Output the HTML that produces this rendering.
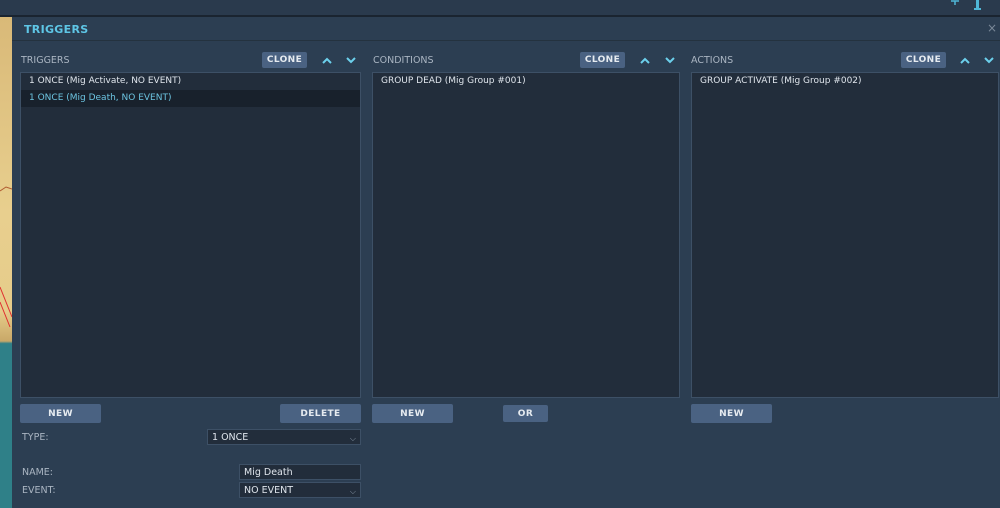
<!DOCTYPE html>
<html><head><meta charset="utf-8"><style>
*{box-sizing:border-box;margin:0;padding:0}
body{width:1000px;height:508px;overflow:hidden;background:#2b3c50;font-family:"DejaVu Sans","Liberation Sans",sans-serif;position:relative;color:#d8dee6}
.abs{position:absolute}
.top{left:0;top:0;width:1000px;height:15px;background:#2a3a4d}
.topline{left:0;top:15px;width:1000px;height:2px;background:#1a2430}
.map{left:0;top:17px;width:12px;height:491px;background:linear-gradient(#d9b978 0,#e8cf8e 40%,#e6cc8a 60%,#c9a868 66%,#2f8088 66.5%,#2f8088 100%)}
.panel{left:12px;top:17px;width:988px;height:491px;background:#2c3e52}
.title{left:24px;top:23px;font-size:11px;font-weight:bold;color:#5ec6e6;letter-spacing:.3px}
.sep{left:12px;top:40px;width:988px;height:1px;background:#24323f}
.x{left:987px;top:21px;font-size:12px;color:#7a8898}
.lbl{font-size:9.5px;color:#aab5c2}
.list{background:#222d3b;border:1px solid #3d5066}
.item{font-size:9px;color:#dfe5ec;height:17px;line-height:17px;padding-left:8px}
.btn{background:#4a6282;color:#e6ebf0;font-size:9px;font-weight:bold;border-radius:2px;letter-spacing:.4px;display:flex;align-items:center;justify-content:center}
.sel{background:#222d3b;border:1px solid #3d5066;font-size:9.5px;color:#dfe5ec;padding-left:4px}
.sel span{position:absolute;right:4px;top:1px;color:#8a98a8;font-size:8px}
</style></head><body>
<div class="abs top"></div>
<svg class="abs" style="left:946px;top:0" width="54" height="12"><path d="M5 1 L13 1 M9 1 L9 5" stroke="#4fb6d6" stroke-width="1.5"/><rect x="30" y="0" width="3" height="9" fill="#4fb6d6"/><rect x="28" y="8" width="7" height="2" fill="#4fb6d6"/></svg>
<div class="abs topline"></div>
<div class="abs map"></div>
<svg class="abs" style="left:0;top:17px" width="12" height="320"><path d="M0 174 L6 170 L12 172" stroke="#b05a30" fill="none"/><path d="M0 270 L12 300 M0 285 L10 310" stroke="#e03030" fill="none"/></svg>
<div class="abs panel"></div>
<div class="abs title">TRIGGERS</div>
<div class="abs x">×</div>
<div class="abs sep"></div>

<svg class="abs" style="left:0;top:0" width="1000" height="80" fill="none" stroke="#6cd0ec" stroke-width="2">
<path d="M323 63 L327 59 L331 63"/><path d="M347 58 L351 62 L355 58"/>
<path d="M641 63 L645 59 L649 63"/><path d="M666 58 L670 62 L674 58"/>
<path d="M961 63 L965 59 L969 63"/><path d="M985 58 L989 62 L993 58"/>
</svg>

<div class="abs lbl" style="left:21px;top:55px">TRIGGERS</div>
<div class="abs btn" style="left:262px;top:52px;width:45px;height:16px">CLONE</div>
<div class="abs list" style="left:20px;top:72px;width:341px;height:326px">
<div class="item">1 ONCE (Mig Activate, NO EVENT)</div>
<div class="item" style="background:#18212c;color:#6cc4e0">1 ONCE (Mig Death, NO EVENT)</div>
</div>

<div class="abs lbl" style="left:373px;top:55px">CONDITIONS</div>
<div class="abs btn" style="left:580px;top:52px;width:45px;height:16px">CLONE</div>
<div class="abs list" style="left:372px;top:72px;width:308px;height:326px">
<div class="item">GROUP DEAD (Mig Group #001)</div>
</div>

<div class="abs lbl" style="left:691px;top:55px">ACTIONS</div>
<div class="abs btn" style="left:901px;top:52px;width:45px;height:16px">CLONE</div>
<div class="abs list" style="left:691px;top:72px;width:308px;height:326px">
<div class="item">GROUP ACTIVATE (Mig Group #002)</div>
</div>

<div class="abs btn" style="left:20px;top:404px;width:81px;height:19px">NEW</div>
<div class="abs btn" style="left:280px;top:404px;width:81px;height:19px">DELETE</div>
<div class="abs btn" style="left:372px;top:404px;width:81px;height:19px">NEW</div>
<div class="abs btn" style="left:503px;top:405px;width:45px;height:17px">OR</div>
<div class="abs btn" style="left:691px;top:404px;width:81px;height:19px">NEW</div>

<div class="abs lbl" style="left:22px;top:432px">TYPE:</div>
<div class="abs sel" style="left:207px;top:429px;width:154px;height:16px;line-height:15px">1 ONCE<span>⌵</span></div>
<div class="abs lbl" style="left:22px;top:467px">NAME:</div>
<div class="abs sel" style="left:239px;top:464px;width:122px;height:16px;line-height:15px">Mig Death</div>
<div class="abs lbl" style="left:22px;top:485px">EVENT:</div>
<div class="abs sel" style="left:239px;top:482px;width:122px;height:16px;line-height:15px">NO EVENT<span>⌵</span></div>
</body></html>
